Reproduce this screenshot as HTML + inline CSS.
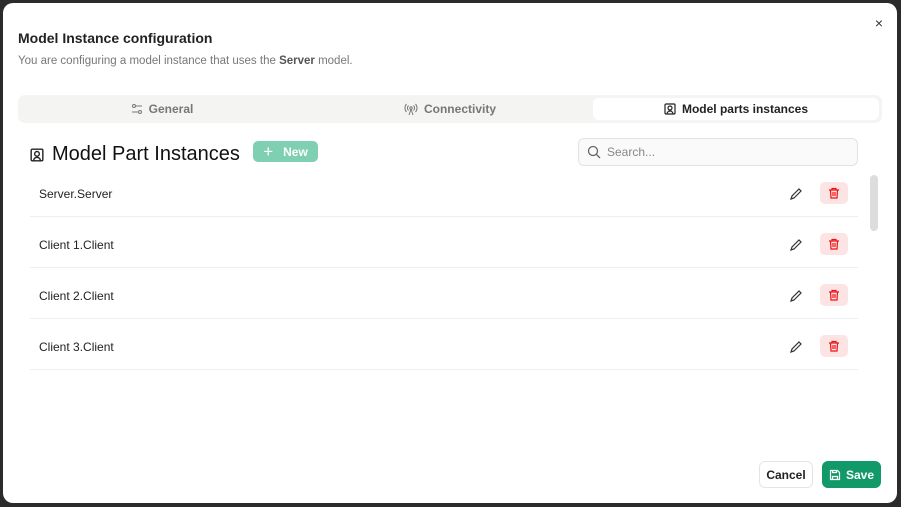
<!DOCTYPE html>
<html><head><style>
*{box-sizing:border-box;margin:0;padding:0}
body{width:901px;height:507px;background:#2b2b2b;font-family:"Liberation Sans",sans-serif;position:relative;overflow:hidden}
.d{position:absolute;left:3px;top:3px;width:894px;height:500px;background:#fff;border-radius:10px}
.abs{position:absolute}
.t{left:15px;top:27px;font-size:14px;font-weight:bold;color:#222}
.s{left:15px;top:52px;font-size:11.5px;color:#777}
.tabs{left:15px;top:92px;width:864px;height:28px;background:#f4f4f3;border-radius:7px}
.tab{position:absolute;top:0;height:28px;line-height:28px;font-size:12px;color:#777;font-weight:bold;display:flex;align-items:center;justify-content:center;gap:6px}
.act{left:575px;top:3px;width:286px;height:22px;background:#fff;border-radius:6px;color:#222}
.h{left:27px;top:140px;font-size:20px;color:#111;display:flex;align-items:center;gap:8px}
.new{left:250px;top:138px;width:65px;height:21px;background:#7fcfb2;border-radius:5px;color:#fff;font-size:12px;font-weight:bold;display:flex;align-items:center;justify-content:center;gap:10px}
.sr{left:575px;top:135px;width:280px;height:28px;border:1px solid #e2e2e2;border-radius:6px;background:#fafafa;font-size:12px;color:#888;display:flex;align-items:center;padding-left:8px;gap:6px}
.row{position:absolute;left:27px;width:828px;height:51px;border-bottom:1px solid #eee;font-size:12px;color:#222}
.row span{position:absolute;left:9px;top:21px}
.pen{position:absolute;left:759px;top:21px}
.del{position:absolute;left:790px;top:16px;width:28px;height:22px;background:#fde4e4;border-radius:5px;display:flex;align-items:center;justify-content:center}
.sb{left:867px;top:172px;width:8px;height:56px;background:#ddd;border-radius:4px}
.cancel{left:756px;top:458px;width:54px;height:27px;border:1px solid #e4e4e4;border-radius:6px;font-size:12px;font-weight:bold;color:#222;display:flex;align-items:center;justify-content:center}
.save{left:819px;top:458px;width:59px;height:27px;background:#12996a;border-radius:6px;font-size:12px;font-weight:bold;color:#fff;display:flex;align-items:center;justify-content:center;gap:5px}
</style></head><body>
<div class="d">
<div class="abs" style="right:14px;top:12px;font-size:14px;color:#333">×</div>
<div class="abs t">Model Instance configuration</div>
<div class="abs s">You are configuring a model instance that uses the <b style="color:#555">Server</b> model.</div>
<div class="abs tabs">
<div class="tab" style="left:0;width:288px"><svg width="12" height="12" viewBox="0 0 12 12" fill="none" stroke="#777" stroke-width="1"><circle cx="3" cy="3" r="1.5"/><path d="M5 3h6M1 9h6"/><circle cx="9" cy="9" r="1.5"/></svg>General</div>
<div class="tab" style="left:288px;width:288px"><svg width="14" height="14" viewBox="0 0 14 14" fill="none" stroke="#777" stroke-width="1"><circle cx="7" cy="6" r="1.2"/><path d="M7 7l-2 6M7 7l2 6M4.5 3.5a3.5 3.5 0 0 0 0 5M9.5 3.5a3.5 3.5 0 0 1 0 5M2.5 2a6 6 0 0 0 0 8M11.5 2a6 6 0 0 1 0 8"/></svg>Connectivity</div>
<div class="tab act"><svg width="12" height="12" viewBox="0 0 12 12" fill="none" stroke="#222" stroke-width="1.2"><rect x="1" y="1" width="10" height="10" rx="1"/><circle cx="6" cy="5" r="2"/><path d="M3 11a3 3 0 0 1 6 0"/></svg>Model parts instances</div>
</div>
<div class="abs h"><svg width="14" height="14" viewBox="0 0 12 12" fill="none" stroke="#222" stroke-width="1.2"><rect x="1" y="1" width="10" height="10" rx="1"/><circle cx="6" cy="5" r="2"/><path d="M3 11a3 3 0 0 1 6 0"/></svg>Model Part Instances</div>
<div class="abs new"><span style="font-size:17px;font-weight:normal">+</span>New</div>
<div class="abs sr"><svg width="14" height="14" viewBox="0 0 14 14" fill="none" stroke="#666" stroke-width="1.3"><circle cx="6" cy="6" r="4.5"/><path d="M9.5 9.5L13 13"/></svg>Search...</div>
<div class="row" style="top:163px"><span>Server.Server</span><svg class="pen" width="14" height="14" viewBox="0 0 14 14" fill="none" stroke="#333" stroke-width="1.2"><path d="M2 12l1-3 7-7 2 2-7 7z"/></svg><div class="del"><svg width="12" height="12" viewBox="0 0 12 12" fill="none" stroke="#e11" stroke-width="1.2"><path d="M1 3h10M4 3V1.5h4V3M2.5 3l.5 8h6l.5-8M5 5v4M7 5v4"/></svg></div></div>
<div class="row" style="top:214px"><span>Client 1.Client</span><svg class="pen" width="14" height="14" viewBox="0 0 14 14" fill="none" stroke="#333" stroke-width="1.2"><path d="M2 12l1-3 7-7 2 2-7 7z"/></svg><div class="del"><svg width="12" height="12" viewBox="0 0 12 12" fill="none" stroke="#e11" stroke-width="1.2"><path d="M1 3h10M4 3V1.5h4V3M2.5 3l.5 8h6l.5-8M5 5v4M7 5v4"/></svg></div></div>
<div class="row" style="top:265px"><span>Client 2.Client</span><svg class="pen" width="14" height="14" viewBox="0 0 14 14" fill="none" stroke="#333" stroke-width="1.2"><path d="M2 12l1-3 7-7 2 2-7 7z"/></svg><div class="del"><svg width="12" height="12" viewBox="0 0 12 12" fill="none" stroke="#e11" stroke-width="1.2"><path d="M1 3h10M4 3V1.5h4V3M2.5 3l.5 8h6l.5-8M5 5v4M7 5v4"/></svg></div></div>
<div class="row" style="top:316px"><span>Client 3.Client</span><svg class="pen" width="14" height="14" viewBox="0 0 14 14" fill="none" stroke="#333" stroke-width="1.2"><path d="M2 12l1-3 7-7 2 2-7 7z"/></svg><div class="del"><svg width="12" height="12" viewBox="0 0 12 12" fill="none" stroke="#e11" stroke-width="1.2"><path d="M1 3h10M4 3V1.5h4V3M2.5 3l.5 8h6l.5-8M5 5v4M7 5v4"/></svg></div></div>
<div class="abs sb"></div>
<div class="abs cancel">Cancel</div>
<div class="abs save"><svg width="12" height="12" viewBox="0 0 12 12" fill="none" stroke="#fff" stroke-width="1.2"><path d="M1.5 1.5h7l2 2v7h-9z M3.5 10.5v-3h5v3 M3.5 1.5v2h4v-2"/></svg>Save</div>
</div>
</body></html>
